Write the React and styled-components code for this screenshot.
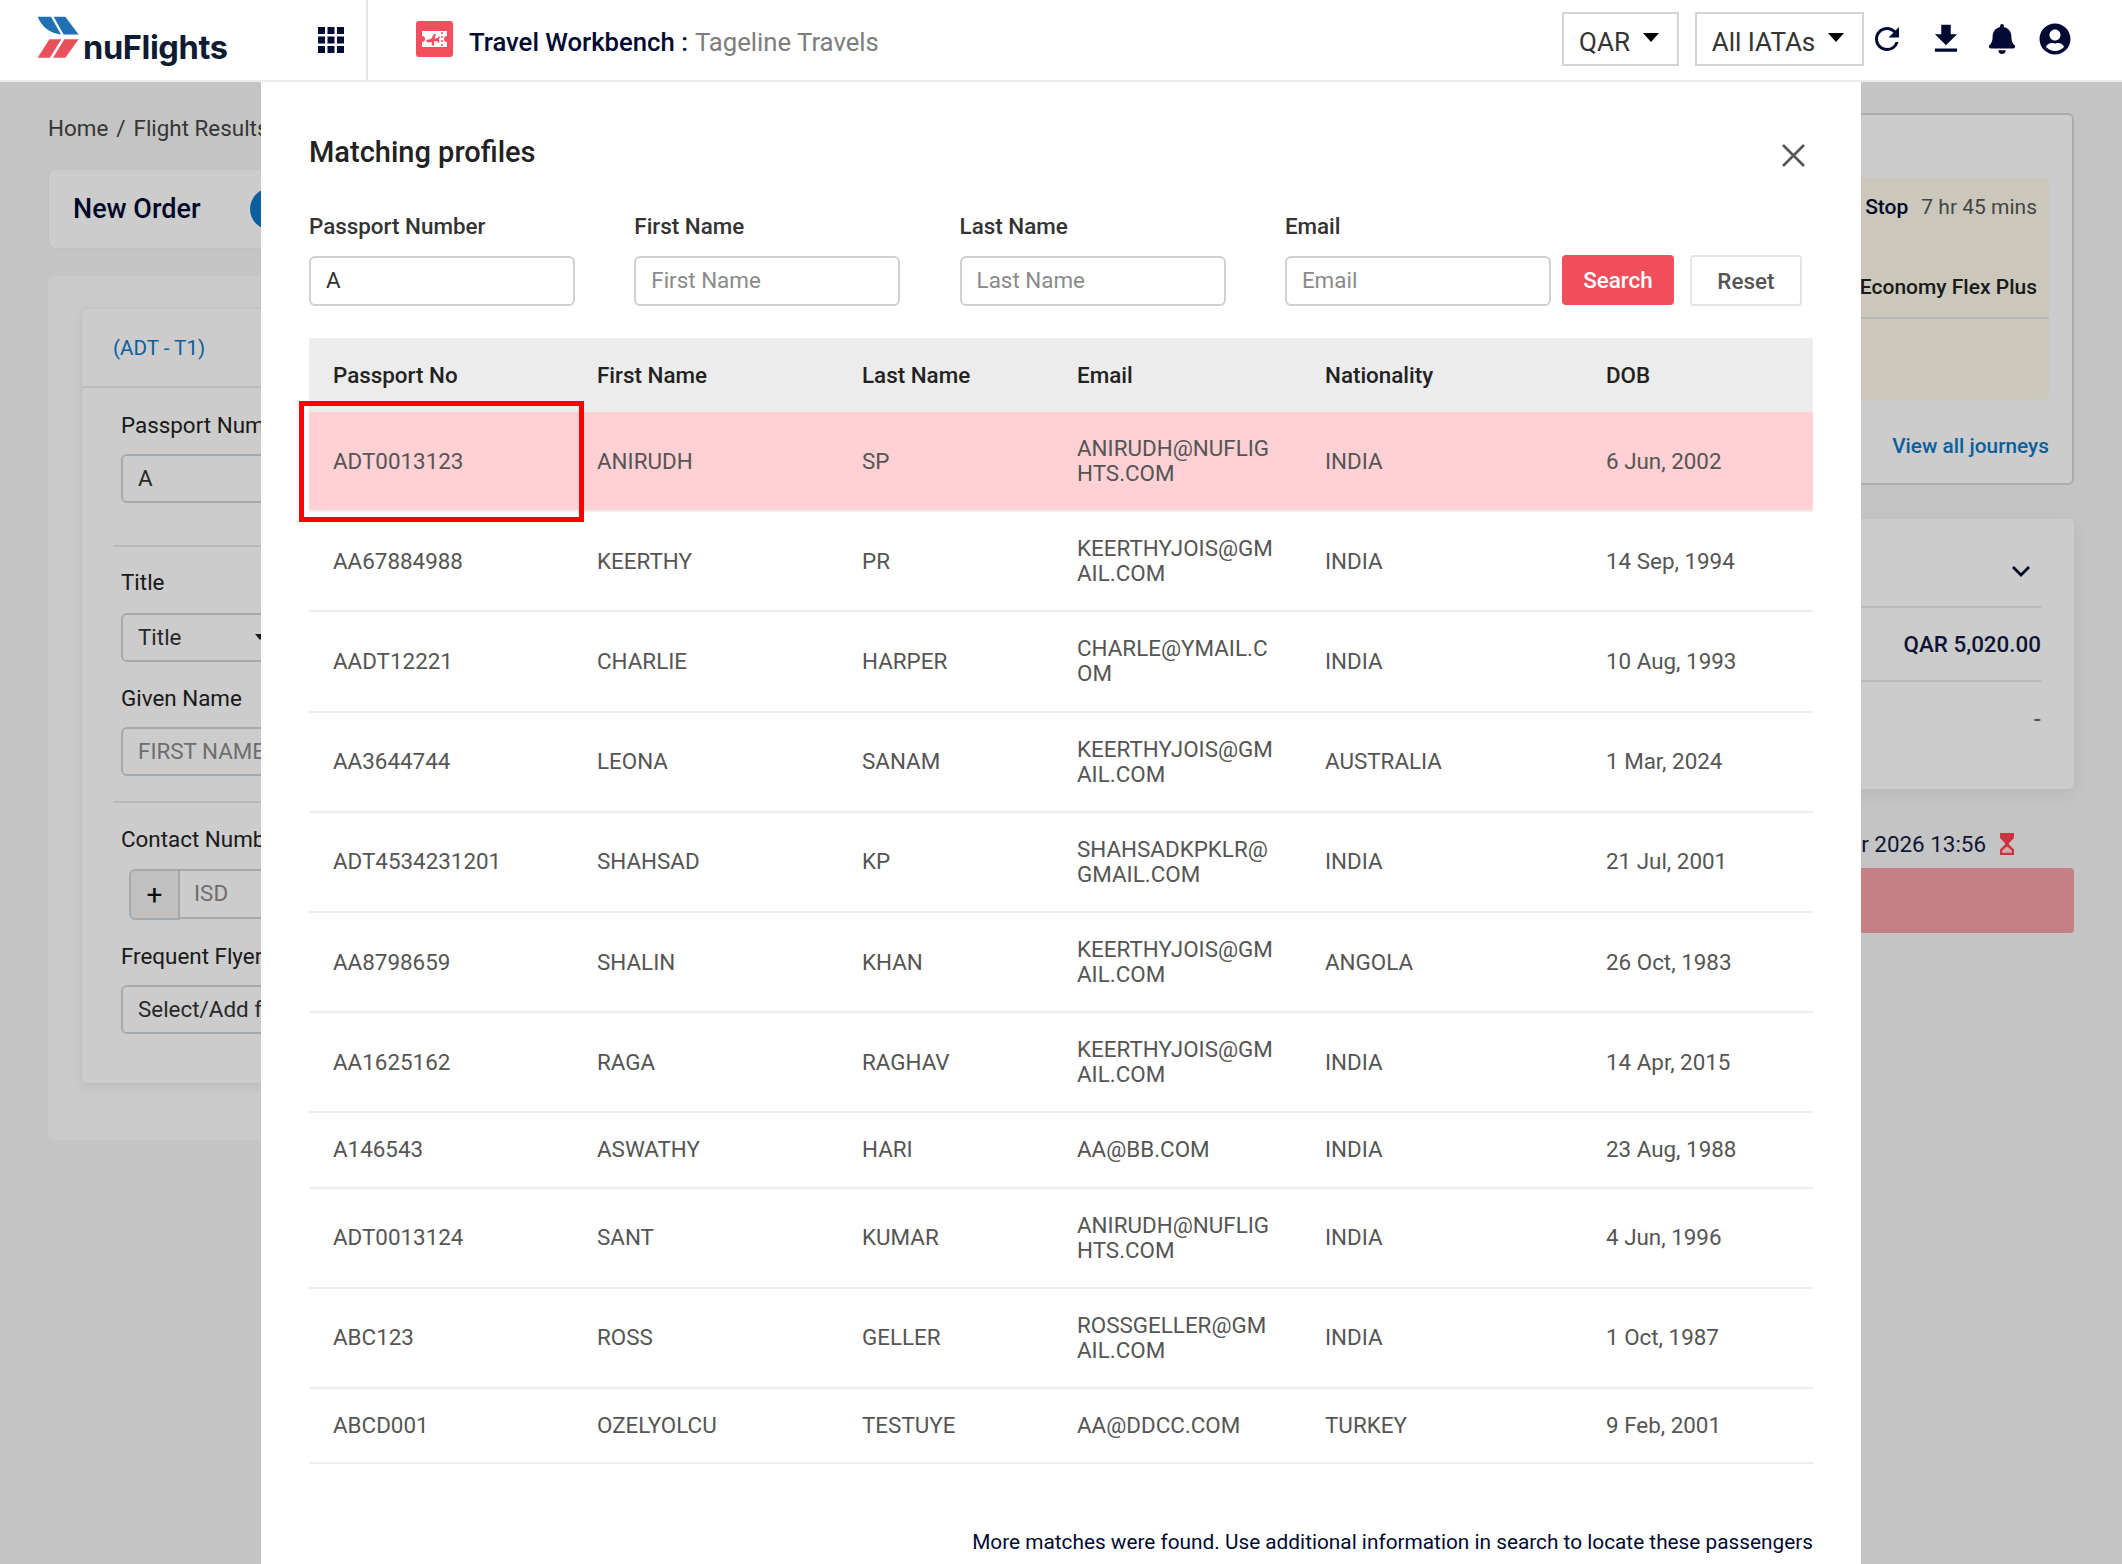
import React from 'react';
import styled, { createGlobalStyle } from 'styled-components';
import { MdRefresh, MdFileDownload } from 'react-icons/md';
import { FaBell, FaUserCircle } from 'react-icons/fa';

const GlobalStyle = createGlobalStyle`
  html, body {
    margin: 0;
    padding: 0;
    background: #f5f5f5;
  }
  * {
    box-sizing: border-box;
  }
  body {
    font-family: Roboto, "Liberation Sans", sans-serif;
  }
`;

const Page = styled.div`
  position: relative;
  width: 2122px;
  height: 1564px;
  overflow: hidden;
  background: #f5f5f5;
  color: #212529;
`;

/* top bar */
const Header = styled.header`
  position: relative;
  z-index: 3;
  display: flex;
  align-items: stretch;
  height: 82px;
  background: #fff;
  border-bottom: 2px solid #ececec;
`;

const BrandCell = styled.div`
  display: flex;
  width: 368px;
  padding: 0 22px 0 37px;
  justify-content: space-between;
  border-right: 2px solid #e6e6e6;
`;

const Logo = styled.div`
  display: flex;
  gap: 4px;
`;

const LogoMark = styled.svg`
  width: 42px;
  height: 43px;
  margin-top: 16px;
`;

const LogoText = styled.span`
  margin-top: 27px;
  font-family: Inter, Roboto, sans-serif;
  font-size: 32.6px;
  line-height: 40px;
  font-weight: 700;
  letter-spacing: -0.4px;
  color: #0f1b33;
`;

const GridIcon = styled.svg`
  width: 26px;
  height: 26px;
  margin-top: 27px;
`;

const WorkbenchCell = styled.div`
  display: flex;
  align-items: center;
  gap: 16px;
  padding-left: 48px;
  padding-bottom: 2px;
`;

const TicketBadge = styled.svg`
  width: 37px;
  height: 36px;
`;

const WorkbenchTitle = styled.div`
  margin-top: 6px;
  font-size: 25.7px;
  font-weight: 500;
  color: #000a33;
  span {
    font-weight: 400;
    color: #7d7d7d;
    margin-left: 7px;
  }
`;

const HeaderRight = styled.div`
  display: flex;
  align-items: center;
  margin-left: auto;
  padding: 0 51px 2px 0;
`;

const HeaderSelect = styled.div`
  display: flex;
  align-items: center;
  justify-content: center;
  gap: 13px;
  width: ${(p) => p.$width}px;
  height: 54px;
  margin-right: ${(p) => p.$right}px;
  padding: 5px 3px 0 0;
  border: 2px solid #d4d4d4;
  font-size: 26px;
  color: #333;
`;

const Caret = styled.i`
  width: 0;
  height: 0;
  margin-top: -9px;
  border-left: 8px solid transparent;
  border-right: 8px solid transparent;
  border-top: 9px solid #000;
`;

const HeaderIcons = styled.div`
  display: flex;
  align-items: center;
  gap: 22px;
  color: #000a33;
  svg {
    display: block;
  }
`;

/* dimmed page behind the modal */
const Main = styled.main`
  display: flex;
  gap: 24px;
  padding: 0 48px;
`;

const LeftColumn = styled.div`
  flex: 1;
  min-width: 0;
  padding-top: 33px;
`;

const Breadcrumb = styled.div`
  font-size: 22.4px;
  line-height: 26px;
  color: #444;
  span {
    margin: 0 8px;
  }
`;

const OrderBar = styled.div`
  display: flex;
  align-items: center;
  height: 80px;
  margin-top: 28px;
  padding-left: 24px;
  background: #ffffff;
  border: 1px solid #f0f0f0;
  border-radius: 8px;
  font-size: 27px;
  font-weight: 500;
  color: #000a33;
`;

const StepDot = styled.i`
  width: 42px;
  height: 42px;
  margin-left: 49px;
  border-radius: 50%;
  background: #0d77c3;
`;

const OrderPanel = styled.div`
  margin-top: 27px;
  padding: 32px 33px 56px;
  background: #fdfdfd;
  border-radius: 6px;
`;

const TravellerCard = styled.div`
  height: 776px;
  background: #fff;
  border: 1px solid #f0f0f0;
  border-radius: 6px;
  box-shadow: 0 4px 12px rgba(0, 0, 0, 0.06);
`;

const TravellerHead = styled.div`
  display: flex;
  align-items: center;
  height: 79px;
  padding-left: 31px;
  border-bottom: 2px solid #eaeaea;
  font-size: 20.6px;
  color: #0d77c3;
`;

const TravellerForm = styled.div`
  padding: 0 39px;
`;

const FormLabel = styled.div`
  margin-top: ${(p) => p.$top}px;
  font-size: 22.4px;
  line-height: 26px;
  color: #222;
  white-space: nowrap;
`;

const FormBox = styled.div`
  display: flex;
  align-items: center;
  justify-content: space-between;
  width: ${(p) => p.$width || 500}px;
  height: 49px;
  margin-top: ${(p) => p.$top}px;
  padding: 0 15px 2px;
  background: #fff;
  border: 2px solid #ced4da;
  border-radius: 6px;
  font-size: 22.4px;
  white-space: nowrap;
  color: ${(p) => (p.$muted ? '#8a8a8a' : '#333')};
`;

const FormRule = styled.div`
  height: 2px;
  margin: ${(p) => p.$top}px 0 0 -8px;
  background: #e6e6e6;
`;

const PhoneRow = styled.div`
  display: flex;
  width: 500px;
  height: 51px;
  margin: 17px 0 0 8px;
`;

const PhonePrefix = styled.div`
  display: flex;
  align-items: center;
  justify-content: center;
  width: 51px;
  background: #f0f0f0;
  border: 2px solid #ced4da;
  border-radius: 6px 0 0 6px;
  font-size: 28px;
  color: #111;
`;

const PhoneInput = styled.div`
  flex: 1;
  display: flex;
  align-items: center;
  height: 50px;
  padding: 0 0 2px 14px;
  background: #fff;
  border: 2px solid #ced4da;
  border-left: 0;
  font-size: 22.4px;
  color: #8a8a8a;
`;

const SelectCaret = styled.i`
  width: 0;
  height: 0;
  border-left: 5px solid transparent;
  border-right: 5px solid transparent;
  border-top: 6px solid #222;
`;

const RightColumn = styled.div`
  width: 400px;
  flex-shrink: 0;
  padding-top: 31px;
`;

const FlightCard = styled.div`
  padding: 62px 23px 24px 0;
  background: #fff;
  border: 2px solid #d8d8d8;
  border-radius: 6px;
`;

const FareBlock = styled.div`
  height: 223px;
  padding: 17px 12px 0 0;
  background: #fefbea;
  border-radius: 6px;
  text-align: right;
  font-size: 21px;
`;

const StopLine = styled.div`
  line-height: 26px;
  color: #555;
  b {
    font-weight: 500;
    color: #000a33;
    margin-right: 13px;
  }
`;

const FareName = styled.div`
  margin: 54px -12px 0 0;
  padding: 0 12px 17px 0;
  line-height: 26px;
  font-weight: 500;
  color: #222;
  border-bottom: 2px solid #e4e4e4;
`;

const JourneysLink = styled.div`
  margin-top: 33px;
  text-align: right;
  font-size: 20.8px;
  line-height: 26px;
  font-weight: 500;
  color: #0d77c3;
`;

const PriceCard = styled.div`
  height: 270px;
  margin-top: 34px;
  padding-right: 33px;
  background: #fff;
  border-radius: 6px;
  box-shadow: 0 6px 20px rgba(0, 0, 0, 0.06);
`;

const PriceRow = styled.div`
  display: flex;
  align-items: center;
  justify-content: flex-end;
  height: ${(p) => p.$height}px;
  border-bottom: ${(p) => (p.$last ? '0' : '2px solid #e8e8e8')};
  font-size: 22.4px;
  font-weight: 500;
  color: ${(p) => (p.$last ? '#666' : '#0f1b45')};
`;

const Chevron = styled.svg`
  width: 20px;
  height: 12px;
  margin: 17px 10px 0 0;
`;

const DeadlineRow = styled.div`
  display: flex;
  align-items: center;
  justify-content: flex-end;
  gap: 14px;
  height: 26px;
  margin-top: 42px;
  padding-right: 60px;
  font-size: 22.4px;
  color: #0f1b45;
`;

const Hourglass = styled.svg`
  width: 14px;
  height: 22px;
`;

const ContinueBar = styled.div`
  height: 65px;
  margin-top: 11px;
  background: #f5a1a6;
  border-radius: 4px;
`;

/* modal */
const Backdrop = styled.div`
  position: absolute;
  z-index: 1;
  top: 82px;
  left: 0;
  right: 0;
  bottom: 0;
  background: rgba(0, 0, 0, 0.2);
`;

const Modal = styled.section`
  position: absolute;
  z-index: 2;
  top: 82px;
  left: 261px;
  width: 1600px;
  bottom: 0;
  padding: 51px 48px 0;
  background: #fff;
`;

const ModalTitle = styled.h2`
  margin: 0;
  font-size: 29px;
  line-height: 38px;
  font-weight: 500;
  color: #222;
`;

const CloseButton = styled.svg`
  position: absolute;
  top: 62px;
  right: 56px;
  width: 23px;
  height: 23px;
`;

const FilterRow = styled.div`
  display: flex;
  align-items: flex-end;
  margin-top: 42px;
`;

const FilterFields = styled.div`
  display: flex;
  gap: 59.3px;
`;

const Field = styled.label`
  display: block;
  width: 266px;
`;

const FieldLabel = styled.div`
  font-size: 22.4px;
  line-height: 26px;
  font-weight: 500;
  color: #333;
`;

const FieldInput = styled.div`
  display: flex;
  align-items: center;
  height: 50px;
  margin-top: 17px;
  padding: 0 0 2px 15px;
  border: 2px solid #d0d0d0;
  border-radius: 6px;
  font-size: 22.4px;
  color: ${(p) => (p.$empty ? '#8a8a8a' : '#333')};
`;

const FilterButton = styled.button`
  width: 112px;
  height: ${(p) => (p.$primary ? 50 : 51)}px;
  margin-left: ${(p) => p.$left}px;
  margin-bottom: ${(p) => (p.$primary ? 1 : 0)}px;
  padding: 0;
  font-family: inherit;
  font-size: 22.4px;
  font-weight: 500;
  border-radius: 4px;
  border: ${(p) => (p.$primary ? '0' : '2px solid #e4e4e4')};
  background: ${(p) => (p.$primary ? '#f04e5b' : '#fff')};
  color: ${(p) => (p.$primary ? '#fff' : '#555')};
`;

const TableWrap = styled.div`
  position: relative;
  margin-top: 32px;
`;

const ProfilesTable = styled.table`
  width: 1504px;
  table-layout: fixed;
  border-collapse: separate;
  border-spacing: 0;
`;

const HeadCell = styled.th`
  height: 74px;
  padding: 0 24px;
  background: #ececec;
  text-align: left;
  font-size: 22.4px;
  font-weight: 500;
  color: #222;
`;

const BodyRow = styled.tr`
  background: ${(p) => (p.$active ? '#ffd0d4' : '#fff')};
`;

const BodyCell = styled.td`
  padding: 24.1px 24px;
  border-bottom: 2px solid #eeeeee;
  font-size: 22.4px;
  line-height: 25px;
  color: #555;
  word-break: break-all;
  vertical-align: middle;
`;

const Highlight = styled.div`
  position: absolute;
  top: 63px;
  left: -10px;
  width: 285px;
  height: 121px;
  border: 5px solid #ff0000;
  pointer-events: none;
`;

const MoreMatches = styled.p`
  margin: 65px 0 0;
  text-align: right;
  font-size: 20.8px;
  line-height: 26px;
  color: #000a33;
`;

const columns = [264, 265, 215, 248, 281, 231];
const headings = ['Passport No', 'First Name', 'Last Name', 'Email', 'Nationality', 'DOB'];

const profiles = [
  ['ADT0013123', 'ANIRUDH', 'SP', 'ANIRUDH@NUFLIGHTS.COM', 'INDIA', '6 Jun, 2002'],
  ['AA67884988', 'KEERTHY', 'PR', 'KEERTHYJOIS@GMAIL.COM', 'INDIA', '14 Sep, 1994'],
  ['AADT12221', 'CHARLIE', 'HARPER', 'CHARLE@YMAIL.COM', 'INDIA', '10 Aug, 1993'],
  ['AA3644744', 'LEONA', 'SANAM', 'KEERTHYJOIS@GMAIL.COM', 'AUSTRALIA', '1 Mar, 2024'],
  ['ADT4534231201', 'SHAHSAD', 'KP', 'SHAHSADKPKLR@GMAIL.COM', 'INDIA', '21 Jul, 2001'],
  ['AA8798659', 'SHALIN', 'KHAN', 'KEERTHYJOIS@GMAIL.COM', 'ANGOLA', '26 Oct, 1983'],
  ['AA1625162', 'RAGA', 'RAGHAV', 'KEERTHYJOIS@GMAIL.COM', 'INDIA', '14 Apr, 2015'],
  ['A146543', 'ASWATHY', 'HARI', 'AA@BB.COM', 'INDIA', '23 Aug, 1988'],
  ['ADT0013124', 'SANT', 'KUMAR', 'ANIRUDH@NUFLIGHTS.COM', 'INDIA', '4 Jun, 1996'],
  ['ABC123', 'ROSS', 'GELLER', 'ROSSGELLER@GMAIL.COM', 'INDIA', '1 Oct, 1987'],
  ['ABCD001', 'OZELYOLCU', 'TESTUYE', 'AA@DDCC.COM', 'TURKEY', '9 Feb, 2001'],
];

const filters = [
  { label: 'Passport Number', value: 'A' },
  { label: 'First Name', placeholder: 'First Name' },
  { label: 'Last Name', placeholder: 'Last Name' },
  { label: 'Email', placeholder: 'Email' },
];

const App = () => {
  return (
    <Page>
      <GlobalStyle />
      <Header>
        <BrandCell>
          <Logo>
            <LogoMark viewBox="20 33 126 128">
              <path d="M22 35h40l30 53c-32-3-56-20-70-53z" fill="#1f6fb2" />
              <path d="M70 35h35l40 53h-45z" fill="#1f6fb2" />
              <path d="M57 102h36L59 158H22z" fill="#e8505c" />
              <path d="M102 102h43l-40 56H68z" fill="#e8505c" />
            </LogoMark>
            <LogoText>nuFlights</LogoText>
          </Logo>
          <GridIcon viewBox="0 0 26 26" fill="#000a33">
            {[0, 9.5, 19].map((y) =>
              [0, 9.5, 19].map((x) => <rect key={`${x}-${y}`} x={x} y={y} width="7" height="7" />)
            )}
          </GridIcon>
        </BrandCell>
        <WorkbenchCell>
          <TicketBadge viewBox="0 0 37 36">
            <rect width="37" height="36" rx="3" fill="#f24e5d" />
            <path d="M6 10h25v5a3 3 0 0 0 0 6v5H6v-5a3 3 0 0 0 0-6z" fill="#fff" />
            <path d="M10 19l5-1 3-5h2l-1.500 4.500 3-.6 1-1.400h1.500l-1 3 .5 3h-1.500l-1-1.500-3 .6v4h-2l-.5-3.500-4 .5z" fill="#f24e5d" />
            <path d="M26 11v2m0 2v2m0 2v2m0 2v2" stroke="#f24e5d" strokeWidth="1.500" />
          </TicketBadge>
          <WorkbenchTitle>
            Travel Workbench :<span>Tageline Travels</span>
          </WorkbenchTitle>
        </WorkbenchCell>
        <HeaderRight>
          <HeaderSelect $width={117} $right={16}>
            QAR <Caret />
          </HeaderSelect>
          <HeaderSelect $width={169} $right={5}>
            All IATAs <Caret />
          </HeaderSelect>
          <HeaderIcons>
            <MdRefresh size={36} />
            <MdFileDownload size={38} />
            <FaBell size={30} />
            <FaUserCircle size={32} />
          </HeaderIcons>
        </HeaderRight>
      </Header>

      <Main>
        <LeftColumn>
          <Breadcrumb>
            Home<span>/</span>Flight Results
          </Breadcrumb>
          <OrderBar>
            New Order
            <StepDot />
          </OrderBar>
          <OrderPanel>
            <TravellerCard>
              <TravellerHead>(ADT - T1)</TravellerHead>
              <TravellerForm>
                <FormLabel $top={24}>Passport Number</FormLabel>
                <FormBox $top={16}>A</FormBox>
                <FormRule $top={42} />
                <FormLabel $top={22}>Title</FormLabel>
                <FormBox $top={18} $width={161}>
                  Title
                  <SelectCaret />
                </FormBox>
                <FormLabel $top={23}>Given Name</FormLabel>
                <FormBox $top={16} $muted>FIRST NAME</FormBox>
                <FormRule $top={25} />
                <FormLabel $top={23}>Contact Number</FormLabel>
                <PhoneRow>
                  <PhonePrefix>+</PhonePrefix>
                  <PhoneInput>ISD</PhoneInput>
                </PhoneRow>
                <FormLabel $top={23}>Frequent Flyer</FormLabel>
                <FormBox $top={16}>Select/Add frequent flyer</FormBox>
              </TravellerForm>
            </TravellerCard>
          </OrderPanel>
        </LeftColumn>

        <RightColumn>
          <FlightCard>
            <FareBlock>
              <StopLine>
                <b>Stop</b>7 hr 45 mins
              </StopLine>
              <FareName>Economy Flex Plus</FareName>
            </FareBlock>
            <JourneysLink>View all journeys</JourneysLink>
          </FlightCard>
          <PriceCard>
            <PriceRow $height={89}>
              <Chevron viewBox="0 0 20 12" fill="none" stroke="#000a33" strokeWidth="2.800">
                <path d="M2 2l8 8 8-8" />
              </Chevron>
            </PriceRow>
            <PriceRow $height={74}>QAR 5,020.00</PriceRow>
            <PriceRow $height={74} $last>-</PriceRow>
          </PriceCard>
          <DeadlineRow>
            15 Apr 2026 13:56
            <Hourglass viewBox="0 0 14 22">
              <path d="M0 0h14v5l-5 5v1.500l5 5V22H0v-5.500l5-5V10L0 5z" fill="#ff4050" />
              <path d="M2.200 19.800v-2.300l4.800-4 4.800 4v2.300z" fill="#ffd8da" />
            </Hourglass>
          </DeadlineRow>
          <ContinueBar />
        </RightColumn>
      </Main>

      <Backdrop />

      <Modal>
        <ModalTitle>Matching profiles</ModalTitle>
        <CloseButton viewBox="0 0 23 23" stroke="#555" strokeWidth="2.600" fill="none">
          <path d="M1 1l21 21M22 1L1 22" />
        </CloseButton>

        <FilterRow>
          <FilterFields>
            {filters.map((filter) => (
              <Field key={filter.label}>
                <FieldLabel>{filter.label}</FieldLabel>
                <FieldInput $empty={!filter.value}>{filter.value || filter.placeholder}</FieldInput>
              </Field>
            ))}
          </FilterFields>
          <FilterButton $primary $left={11}>Search</FilterButton>
          <FilterButton $left={16}>Reset</FilterButton>
        </FilterRow>

        <TableWrap>
          <ProfilesTable>
            <colgroup>
              {columns.map((width, i) => (
                <col key={i} width={width} />
              ))}
            </colgroup>
            <thead>
              <tr>
                {headings.map((heading) => (
                  <HeadCell key={heading}>{heading}</HeadCell>
                ))}
              </tr>
            </thead>
            <tbody>
              {profiles.map((row, index) => (
                <BodyRow key={row[0]} $active={index === 0}>
                  {row.map((value, i) => (
                    <BodyCell key={i}>{value}</BodyCell>
                  ))}
                </BodyRow>
              ))}
            </tbody>
          </ProfilesTable>
          <Highlight />
        </TableWrap>

        <MoreMatches>More matches were found. Use additional information in search to locate these passengers</MoreMatches>
      </Modal>
    </Page>
  );
};

export default App;
